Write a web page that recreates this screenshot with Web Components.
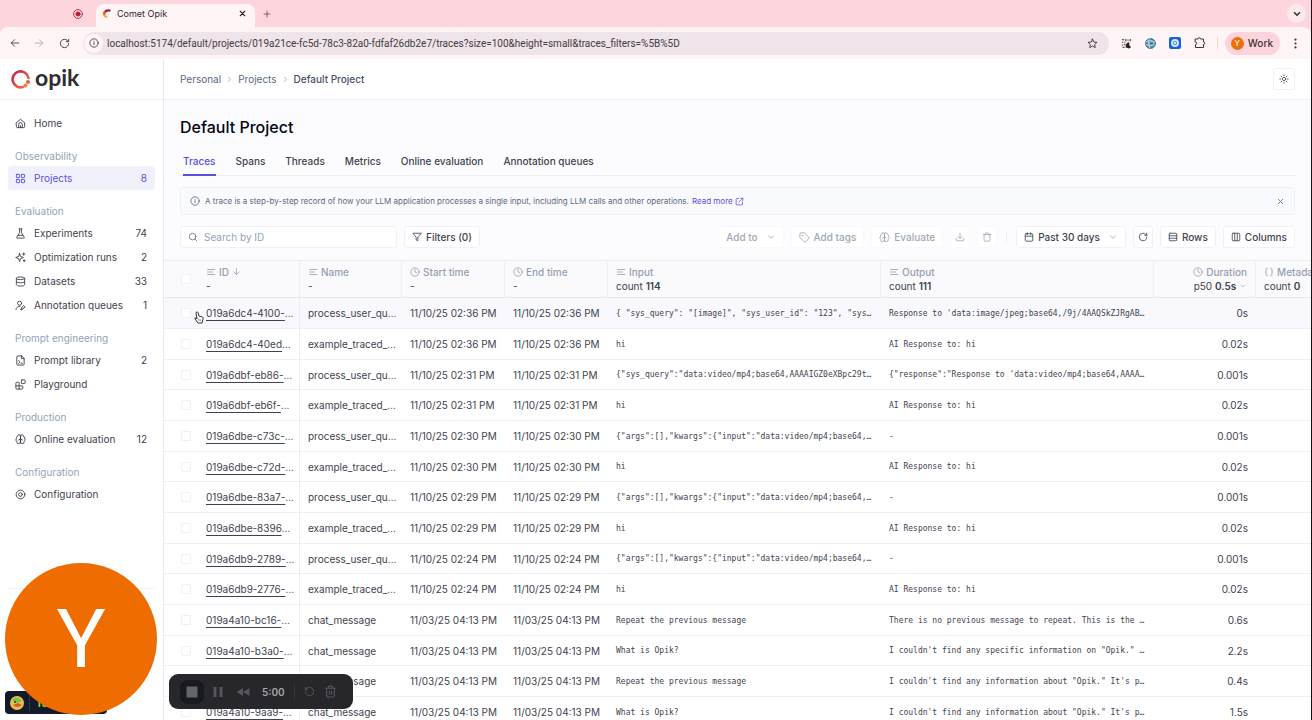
<!DOCTYPE html>
<html lang="en">
<head>
<meta charset="utf-8">
<title>Comet Opik</title>
<style>
html,body{margin:0;height:100%;overflow:hidden;background:#fdfcff;font-family:Inter,sans-serif}
</style>
</head>
<body>
<opik-app></opik-app>
<script>
const ICONS = {
  home:'<path d="M3 10l9-7 9 7v9a2 2 0 0 1-2 2H5a2 2 0 0 1-2-2z"/><path d="M8 21v-7a4 4 0 0 1 8 0v7M12 17v4"/>',
  grid:'<rect x="3" y="3" width="7" height="7" rx="1"/><rect x="14" y="3" width="7" height="7" rx="1"/><rect x="14" y="14" width="7" height="7" rx="1"/><rect x="3" y="14" width="7" height="7" rx="1"/>',
  flask:'<path d="M9 2h6M10 2v8L4 20a1 1 0 0 0 1 2h14a1 1 0 0 0 1-2L14 10V2M7 16h10"/>',
  sparkles:'<path d="M10 3l2 6.500 6.500 2.500-6.500 2.500-2 6.500-2-6.500L1.500 12 8 9.500zM19 2v5M16.500 4.500h5M20 17v4M18 19h4"/>',
  database:'<ellipse cx="12" cy="5" rx="9" ry="3"/><path d="M3 5v14a9 3 0 0 0 18 0V5M3 12a9 3 0 0 0 18 0"/>',
  userpen:'<circle cx="10" cy="7" r="4.500"/><path d="M2 21a8 8 0 0 1 9-7.500M13 21l1-4 5-5 3 3-5 5zM13 21l4-4"/>',
  filecode:'<path d="M14 2H6a2 2 0 0 0-2 2v16a2 2 0 0 0 2 2h12a2 2 0 0 0 2-2V8zM14 2v6h6M8 12l3 3-3 3M13 18h3"/>',
  blocks:'<path d="M9 22V8a1 1 0 0 0-1-1H4a2 2 0 0 0-2 2v11a2 2 0 0 0 2 2h11a2 2 0 0 0 2-2v-4a1 1 0 0 0-1-1H2"/><rect x="14" y="2" width="8" height="8" rx="1"/>',
  brain:'<path d="M12 4a3 3 0 0 0-6 1 4 4 0 0 0-3 5 4 4 0 0 0 1 6 4 4 0 0 0 8 2zM12 4a3 3 0 0 1 6 1 4 4 0 0 1 3 5 4 4 0 0 1-1 6 4 4 0 0 1-8 2zM12 4v16M8 13l4-2 4 2"/>',
  bolt:'<circle cx="12" cy="12" r="9.500"/><circle cx="12" cy="12" r="4"/>',
  info:'<circle cx="12" cy="12" r="10"/><path d="M12 16v-5M12 7.500v.500"/>',
  search:'<circle cx="11" cy="11" r="8"/><path d="M21 21l-4.300-4.300"/>',
  filter:'<path d="M22 3H2l8 9.500V19l4 2v-8.500z"/>',
  down:'<path d="M6 9l6 6 6-6"/>',
  right:'<path d="M9 18l6-6-6-6"/>',
  tag:'<path d="M12.600 2.600A2 2 0 0 0 11 2H4a2 2 0 0 0-2 2v7a2 2 0 0 0 .600 1.400l8.700 8.700a2.400 2.400 0 0 0 3.400 0l6.600-6.600a2.400 2.400 0 0 0 0-3.400z"/><circle cx="7.500" cy="7.500" r=".700"/>',
  download:'<path d="M3 15v4a2 2 0 0 0 2 2h14a2 2 0 0 0 2-2v-4M7 10l5 5 5-5M12 15V3"/>',
  trash:'<path d="M3 6h18M19 6v14a2 2 0 0 1-2 2H7a2 2 0 0 1-2-2V6M8 6V4a2 2 0 0 1 2-2h4a2 2 0 0 1 2 2v2"/>',
  trashlines:'<path d="M3 6h18M19 6v14a2 2 0 0 1-2 2H7a2 2 0 0 1-2-2V6M8 6V4a2 2 0 0 1 2-2h4a2 2 0 0 1 2 2v2M10 11v6M14 11v6"/>',
  calendar:'<rect x="3" y="4" width="18" height="18" rx="2"/><path d="M8 2v4M16 2v4M3 10h18"/>',
  refresh:'<path d="M21 12a9 9 0 1 1-9-9 9.800 9.800 0 0 1 6.700 2.700L21 8M21 3v5h-5"/>',
  undo:'<path d="M3 12a9 9 0 1 0 9-9 9.800 9.800 0 0 0-6.700 2.700L3 8M3 3v5h5"/>',
  rows:'<rect x="3" y="3" width="18" height="18" rx="2"/><path d="M3 9h18M3 15h18"/>',
  columns:'<rect x="3" y="3" width="18" height="18" rx="2"/><path d="M9 3v18M15 3v18"/>',
  x:'<path d="M18 6L6 18M6 6l12 12"/>',
  plus:'<path d="M12 3v18M3 12h18"/>',
  external:'<path d="M10 4H5a2 2 0 0 0-2 2v13a2 2 0 0 0 2 2h13a2 2 0 0 0 2-2v-6M15 3h6v6M10 14L21 3"/>',
  text:'<path d="M4 6h17M4 12h12M4 18h17"/>',
  clock:'<circle cx="12" cy="12" r="10"/><path d="M12 6v6l4 2"/>',
  braces:'<path d="M8 3H7a2 2 0 0 0-2 2v5a2 2 0 0 1-2 2 2 2 0 0 1 2 2v5c0 1 1 2 2 2h1M16 21h1a2 2 0 0 0 2-2v-5c0-1 1-2 2-2a2 2 0 0 1-2-2V5a2 2 0 0 0-2-2h-1"/>',
  arrowdown:'<path d="M12 4v16M5 13l7 7 7-7"/>',
  back:'<path d="M21 12H3M11 4l-8 8 8 8"/>',
  fwd:'<path d="M3 12h18M13 4l8 8-8 8"/>',
  star:'<path d="M12 2.500l2.900 6.200 6.800.800-5 4.700 1.300 6.700-6-3.300-6 3.300 1.300-6.700-5-4.700 6.800-.800z"/>',
  puzzle:'<path d="M3 4h5a2.500 2.500 0 0 1 5 0h6v6a2.500 2.500 0 0 1 0 5v6H3v-6a2.500 2.500 0 0 0 0-5z"/>',
  dots:'<g fill="currentColor" stroke="none"><circle cx="12" cy="3.500" r="2.400"/><circle cx="12" cy="12" r="2.400"/><circle cx="12" cy="20.500" r="2.400"/></g>',
  sun:'<circle cx="12" cy="12" r="4"/><path d="M12 2v2M12 20v2M5 5l1.400 1.400M17.600 17.600L19 19M2 12h2M20 12h2M5 19l1.400-1.400M17.600 6.400L19 5"/>',
  record:'<circle cx="12" cy="12" r="10.500"/><circle cx="12" cy="12" r="5" fill="currentColor"/>',
  stop:'<rect x="1" y="1" width="22" height="22" rx="1" fill="currentColor" stroke="none"/>',
  pause:'<path d="M3 2h6v20H3zM15 2h6v20h-6z" fill="currentColor" stroke="none"/>',
  rewind:'<path d="M12 5v14L1 12zM23 5v14l-11-7z" fill="currentColor" stroke="none"/>',
  comet:'<g fill="none" stroke-width="6"><path d="M11 21A9 9 0 0 1 7 7" stroke="#f9b233"/><path d="M6 13A9 9 0 0 1 12 5" stroke="#ee4b2b"/><path d="M11 5q5-2 9-1" stroke="#9c1c4c"/></g>',
  qr:'<g fill="#666" stroke="none"><path d="M2 2h5v3H2zM9 2h3v5H9zM14 3h3v3h-3zM19 2h3v5h-3zM2 8h3v3H2zM7 8h3v2H7zM14 8h4v2h-4zM2 14h3v3H2zM7 12h3v4H7zM3 19h5v3H3zM10 18h3v3h-3z"/><path d="M19 11a6 6 0 1 0 3 8 5 5 0 0 1-3-8z" fill="#222"/></g>',
  globe:'<circle cx="12" cy="12" r="11" fill="#5088ad" stroke="#49779b"/><path d="M3 8q9-6 18 1M3 15q8 5 17 0M9 2q-4 9 1 19" stroke="#c4dbe5" stroke-width="2"/><path d="M10 9h9v6h-9z" fill="#29587d" stroke="#b9d3df"/>',
  bluebox:'<rect width="24" height="24" rx="4" fill="#1463d8" stroke="none"/><circle cx="12" cy="12" r="6" fill="#3f83ea" stroke="#d4e5ff" stroke-width="4"/><circle cx="12" cy="12" r="2" fill="#fff" stroke="none"/>'
};
class OpikIcon extends HTMLElement{
  constructor(){super();this.attachShadow({mode:'open'});}
  connectedCallback(){
    const s=this.getAttribute('size')||12,w=this.getAttribute('weight')||2;
    this.shadowRoot.innerHTML=`<style>:host{display:inline-flex;flex:none}svg{display:block}</style><svg width="${s}" height="${s}" viewBox="0 0 24 24" fill="none" stroke="currentColor" stroke-width="${w}" stroke-linecap="round" stroke-linejoin="round" aria-hidden="true">${ICONS[this.getAttribute('name')]}</svg>`;
  }
}
customElements.define('opik-icon',OpikIcon);

function define(name,css,html,after){
  const t=document.createElement('template');
  t.innerHTML=`<style>*{box-sizing:border-box}button,input,a{font:inherit;color:inherit}button{border:0;background:none;padding:0;margin:0;display:inline-flex;align-items:center;justify-content:center}a{text-decoration:none}${css}</style>${html}`;
  customElements.define(name,class extends HTMLElement{
    constructor(){super();this.attachShadow({mode:'open'}).append(t.content.cloneNode(true));}
    connectedCallback(){if(after)after(this,this.shadowRoot);}
  });
}

define('browser-chrome',`
:host{display:block;flex:none;color:#40343a;background:#fdd5dd}
.tabs{height:27px;display:flex;align-items:flex-end;padding-right:5px}
.rec{margin:0 13px 8px 73px;color:#ba1830}
.tab{width:159px;height:23px;background:#fff4f6;border-radius:8px 8px 0 0;display:flex;align-items:center;padding:0 8px 4px 6px;font-size:9px;color:#33292d}
.tab span{flex:1;padding-left:6px}
.new{margin:0 0 9px 8px}
.menu{margin-left:auto;margin-bottom:4px;width:19px;height:19px;border-radius:50%;background:#feeaee}
.bar{height:32px;background:#fff4f6;display:flex;align-items:center;padding:0 10px;border-radius:8px 8px 0 0}
.bar button{color:#40343a}
.bar .f{margin:0 15px 0 14px;color:#b0a4a9}
.url{flex:1;height:23px;margin-left:13px;border-radius:12px;background:#eee4e9;display:flex;align-items:center;padding:0 11px 0 1px;gap:4px}
.url i{width:19px;height:19px;border-radius:50%;background:#fff4f6;display:flex;align-items:center;justify-content:center}
.url input{flex:1;min-width:0;border:0;background:none;padding:0;outline:0;font:10px Roboto,sans-serif;color:#443a42}
.ext{display:flex;gap:13px;align-items:center;padding:0 11px 0 12px}
.sep{width:1px;height:12px;background:#f5d3da;margin-right:7px}
.work{height:23px;border-radius:12px;background:#fdd3dc;padding:0 7px 0 6px;gap:4px;font-size:10px;font-weight:500;margin-right:10px}
.work b{width:13px;height:13px;border-radius:50%;background:#e8710a;color:#fff;font-size:8px;font-weight:400;display:flex;align-items:center;justify-content:center}
`,`
<div class="tabs"><opik-icon class="rec" name="record" size="10"></opik-icon>
<div class="tab"><opik-icon name="comet" size="9"></opik-icon><span>Comet Opik</span><button aria-label="Close tab"><opik-icon name="x" size="9" weight="3"></opik-icon></button></div>
<button class="new" aria-label="New tab"><opik-icon name="plus" size="8"></opik-icon></button>
<button class="menu" aria-label="Tab search"><opik-icon name="down" size="10" weight="4"></opik-icon></button></div>
<div class="bar"><button aria-label="Back"><opik-icon name="back" size="10"></opik-icon></button><button class="f" aria-label="Forward"><opik-icon name="fwd" size="10"></opik-icon></button><button aria-label="Reload"><opik-icon name="refresh" size="11"></opik-icon></button>
<div class="url"><i><opik-icon name="info" size="10"></opik-icon></i><input aria-label="Address" value="localhost:5174/default/projects/019a21ce-fc5d-78c3-82a0-fdfaf26db2e7/traces?size=100&amp;height=small&amp;traces_filters=%5B%5D"><opik-icon name="star" size="11"></opik-icon></div>
<div class="ext"><opik-icon name="qr" size="11"></opik-icon><opik-icon name="globe" size="11"></opik-icon><opik-icon name="bluebox" size="12"></opik-icon><opik-icon name="puzzle" size="12"></opik-icon></div>
<span class="sep"></span><button class="work"><b>Y</b>Work</button><button aria-label="Menu"><opik-icon name="dots" size="11"></opik-icon></button></div>`);

define('nav-item',`
:host{display:block}
a{display:flex;align-items:center;gap:8px;height:24px;padding:0 8px 0 7px;border-radius:3px;font-size:10px;color:#3f434f}
span{flex:1;white-space:nowrap}
b{font-weight:400}
:host([active]) a{background:#f1f1fb;color:#5a51dc}
`,`<a href="#"><opik-icon size="11"></opik-icon><span><slot></slot></span><b></b></a>`,
(h,r)=>{r.querySelector('opik-icon').setAttribute('name',h.getAttribute('icon'));r.querySelector('opik-icon').connectedCallback();r.querySelector('b').textContent=h.getAttribute('count')||'';});

define('nav-group',`
:host{display:block;padding-top:11px}
h2{margin:0;height:20px;line-height:20px;padding-left:7px;font-size:10px;font-weight:400;color:#94a3b8}
`,`<h2></h2><slot></slot>`,(h,r)=>{r.querySelector('h2').textContent=h.getAttribute('label');});

define('side-bar',`
:host{display:flex;flex-direction:column;width:164px;flex:none;box-sizing:border-box;background:#fff;border-right:1px solid #e8eaf2}
.logo{height:41px;flex:none;border-bottom:1px solid #eceef4;display:flex;align-items:center;padding-left:11px;gap:4px;color:#2f2d32;font:700 23px/28px Lato,sans-serif}
.logo span{padding-bottom:4px}
nav{flex:1;padding:11px 8px 0}
footer{height:132px;flex:none;margin:0 8px;border-top:1px solid #f0f1f6}
`,`<div class="logo"><svg width="20" height="21" viewBox="0 0 20 21" fill="none"><defs><linearGradient id="g" x1="0" y1="0" x2="1" y2="1"><stop stop-color="#c21d4c"/><stop offset="1" stop-color="#fb7648"/></linearGradient></defs><path d="M17.500 9A8 8 0 1 0 12 18" stroke="url(#g)" stroke-width="2.600" stroke-linecap="round"/><circle cx="17" cy="13" r="2" fill="#ef5a45"/><circle cx="14.500" cy="16.500" r="2" fill="#f97a4e"/></svg><span>opik</span></div>
<nav><nav-item icon="home">Home</nav-item>
<nav-group label="Observability"><nav-item icon="grid" count="8" active>Projects</nav-item></nav-group>
<nav-group label="Evaluation"><nav-item icon="flask" count="74">Experiments</nav-item><nav-item icon="sparkles" count="2">Optimization runs</nav-item><nav-item icon="database" count="33">Datasets</nav-item><nav-item icon="userpen" count="1">Annotation queues</nav-item></nav-group>
<nav-group label="Prompt engineering"><nav-item icon="filecode" count="2">Prompt library</nav-item><nav-item icon="blocks">Playground</nav-item></nav-group>
<nav-group label="Production"><nav-item icon="brain" count="12">Online evaluation</nav-item></nav-group>
<nav-group label="Configuration"><nav-item icon="bolt">Configuration</nav-item></nav-group></nav><footer></footer>`);

define('page-header',`
:host{display:flex;align-items:center;height:41px;flex:none;box-sizing:border-box;background:#fff;border-bottom:1px solid #eceef4;padding:0 16px;font-size:10px;color:#5c6a80}
nav{display:flex;align-items:center;gap:4px;flex:1}
nav opik-icon{color:#94a3b8}
b{font-weight:500;color:#45506a}
button{width:22px;height:22px;border:1px solid #f0f1f6;border-radius:3px;color:#45454b}
`,`<nav aria-label="Breadcrumb"><a href="#">Personal</a><opik-icon name="right" size="9"></opik-icon><a href="#">Projects</a><opik-icon name="right" size="9"></opik-icon><b>Default Project</b></nav><button aria-label="Theme"><opik-icon name="sun" size="10"></opik-icon></button>`);

define('project-head',`
:host{display:block;padding:16px 16px 0}
h1{margin:0;font-size:16px;line-height:22px;font-weight:500;color:#020617}
.tabs{display:flex;gap:20px;height:27px;margin-top:11px;padding-left:3px;border-bottom:1px solid #eceef4;font-size:10px;font-weight:500;color:#3f434f}
.tabs button{align-items:flex-start;padding-top:6px;height:27px}
.tabs .on{color:#5a51dc;border-bottom:2px solid #5a51dc}
.note{margin-top:11px;height:28px;border:1px solid #f0f1f7;border-radius:3px;background:#f9fafd;display:flex;align-items:center;padding:0 9px;font-size:8px;color:#5c6a80}
.note a{color:#5a51dc;display:inline-flex;align-items:center;gap:2px;margin-left:3px}
.note span{flex:1;padding-left:5px;white-space:nowrap}
`,`<h1>Default Project</h1>
<div class="tabs" role="tablist"><button class="on" role="tab">Traces</button><button role="tab">Spans</button><button role="tab">Threads</button><button role="tab">Metrics</button><button role="tab">Online evaluation</button><button role="tab">Annotation queues</button></div>
<div class="note"><opik-icon name="info" size="10"></opik-icon><span>A trace is a step-by-step record of how your LLM application processes a single input, including LLM calls and other operations.<a href="#">Read more<opik-icon name="external" size="9"></opik-icon></a></span><button aria-label="Dismiss"><opik-icon name="x" size="9"></opik-icon></button></div>`);

define('trace-toolbar',`
:host{display:flex;align-items:center;padding:11px 16px 12px;gap:7px;font-size:10px;font-weight:500;color:#3f434f}
button,label{height:22px;border:1px solid #f0f1f6;border-radius:3px;background:#fff;gap:4px;padding:0 7px;white-space:nowrap}
label{display:flex;align-items:center;gap:6px;width:217px;color:#64748b}
input{border:0;padding:0;outline:0;background:none;min-width:0;flex:1;font-weight:400}
input::placeholder{color:#94a3b8;opacity:1}
.push{margin-left:auto}
.off{color:#a2a9b5;border-color:#f9f9fc}
.sq{width:20px;padding:0}
.sep{width:1px;height:12px;background:#eceef4;margin:0 2px}
.soft{color:#a2a9b5;margin-left:4px}
`,`<label><opik-icon name="search" size="10"></opik-icon><input placeholder="Search by ID" aria-label="Search by ID"></label>
<button><opik-icon name="filter" size="10"></opik-icon>Filters (0)</button>
<button class="off push" disabled>Add to<opik-icon class="soft" name="down" size="10"></opik-icon></button>
<button class="off" disabled><opik-icon name="tag" size="11"></opik-icon>Add tags</button>
<button class="off" disabled><opik-icon name="brain" size="11"></opik-icon>Evaluate</button>
<button class="off sq" disabled aria-label="Download"><opik-icon name="download" size="10"></opik-icon></button>
<button class="off sq" disabled aria-label="Delete"><opik-icon name="trash" size="10"></opik-icon></button>
<span class="sep"></span>
<button><opik-icon name="calendar" size="10"></opik-icon>Past 30 days<opik-icon class="soft" name="down" size="10"></opik-icon></button>
<button class="sq" aria-label="Refresh"><opik-icon name="refresh" size="10"></opik-icon></button>
<button><opik-icon name="rows" size="10"></opik-icon>Rows</button>
<button><opik-icon name="columns" size="10"></opik-icon>Columns</button>`);

const P='process_user_qu…',E='example_traced_…',C='chat_message',ARGS='{"args":[],"kwargs":{"input":"data:video/mp4;base64,…';
const ROWS=[
['019a6dc4-4100-',P,'11/10/25 02:36 PM','{ "sys_query": "[image]", "sys_user_id": "123", "sys…','Response to \'data:image/jpeg;base64,/9j/4AAQSkZJRgAB…','0s'],
['019a6dc4-40ed',E,'11/10/25 02:36 PM','hi','AI Response to: hi','0.02s'],
['019a6dbf-eb86-',P,'11/10/25 02:31 PM','{"sys_query":"data:video/mp4;base64,AAAAIGZ0eXBpc29t…','{"response":"Response to \'data:video/mp4;base64,AAAA…','0.001s'],
['019a6dbf-eb6f-',E,'11/10/25 02:31 PM','hi','AI Response to: hi','0.02s'],
['019a6dbe-c73c-',P,'11/10/25 02:30 PM',ARGS,'-','0.001s'],
['019a6dbe-c72d-',E,'11/10/25 02:30 PM','hi','AI Response to: hi','0.02s'],
['019a6dbe-83a7-',P,'11/10/25 02:29 PM',ARGS,'-','0.001s'],
['019a6dbe-8396',E,'11/10/25 02:29 PM','hi','AI Response to: hi','0.02s'],
['019a6db9-2789-',P,'11/10/25 02:24 PM',ARGS,'-','0.001s'],
['019a6db9-2776-',E,'11/10/25 02:24 PM','hi','AI Response to: hi','0.02s'],
['019a4a10-bc16-',C,'11/03/25 04:13 PM','Repeat the previous message','There is no previous message to repeat. This is the …','0.6s'],
['019a4a10-b3a0-',C,'11/03/25 04:13 PM','What is Opik?','I couldn\'t find any specific information on "Opik." …','2.2s'],
['019a4a10-a6f2-',C,'11/03/25 04:13 PM','Repeat the previous message','I couldn\'t find any information about "Opik." It\'s p…','0.4s'],
['019a4a10-9aa9-',C,'11/03/25 04:13 PM','What is Opik?','I couldn\'t find any information about "Opik." It\'s p…','1.5s']];

define('trace-table',`
:host{display:block;flex:1;min-height:0;overflow:hidden}
table{width:1192px;table-layout:fixed;border-collapse:separate;border-spacing:0;font-size:10px;color:#3f434f}
.c0{width:34px}.c1,.c2,.c7{width:102px}.c3,.c4{width:103px}.c5,.c6{width:273px}
th{height:38px;text-align:left;font-weight:400;padding:0 8px;border-top:1px solid #eceef4;border-bottom:1px solid #e6e8f0;background:#fafafc;vertical-align:middle;border-right:1px solid #f0f1f6}
th:first-child{border-right:0}
th div{display:flex;align-items:center;gap:3px;height:14px;line-height:14px;white-space:nowrap;font-weight:500;color:#94a0b3}
th p{margin:0;height:14px;line-height:14px;white-space:nowrap}
th b{font-weight:600}
p opik-icon{color:#a2a9b5}
td{height:31px;padding:0 2px 0 8px;border-bottom:1px solid #eff0f6;background:#fff;white-space:nowrap}
tr:nth-child(3n) td{height:30px}
tr:first-child td{background:#f9f9fd}
td:nth-child(2){border-right:1px solid #eceef5}
td:nth-child(6),td:nth-child(7){font:8px "DejaVu Sans Mono",monospace}
td a{text-decoration:underline;text-underline-offset:3px}
.r div{justify-content:flex-end}
.r{text-align:right}
td.r{padding-right:8px}
input{appearance:none;display:block;width:10px;height:10px;margin:0 0 0 9px;border:1px solid #f0f0f5;border-radius:2px;background:#fff}
`,`<table><colgroup><col class="c0"><col class="c1"><col class="c2"><col class="c3"><col class="c4"><col class="c5"><col class="c6"><col class="c7"><col></colgroup><thead><tr></tr></thead><tbody></tbody></table>`,
(h,r)=>{
  const ic=(n,s=10)=>`<opik-icon name="${n}" size="${s}"></opik-icon>`;
  const box=l=>`<input type="checkbox" aria-label="${l}">`;
  const H=[['text','ID '+ic('arrowdown',9),'-'],['text','Name','-'],['clock','Start time','-'],['clock','End time','-'],['text','Input','count <b>114</b>'],['text','Output','count <b>111</b>'],['clock','Duration','p50 <b>0.5s</b> '+ic('down',8)],['braces','Metadata','count <b>0</b>']];
  r.querySelector('thead tr').innerHTML=`<th>${box('Select all')}</th>`+H.map((x,i)=>`<th class="${i==6?'r':''}"><div>${ic(x[0])}<span>${x[1]}</span></div><p>${x[2]}</p></th>`).join('');
  r.querySelector('tbody').innerHTML=ROWS.map(x=>`<tr><td>${box('Select '+x[0])}</td><td><a href="#">${x[0]}</a>…</td><td>${x[1]}</td><td>${x[2]}</td><td>${x[2]}</td><td>${x[3]}</td><td>${x[4]}</td><td class="r">${x[5]}</td><td></td></tr>`).join('');
});

define('recorder-bar',`
:host{display:flex;align-items:center;height:35px;width:184px;box-sizing:border-box;border-radius:9px;background:#27262b;font-size:10px;font-weight:600;padding:0 11px}
.s{width:24px;height:24px;border-radius:8px;background:#171a1e;color:#63656a;margin-right:8px}
button{color:#55555b}time{color:#a5a5aa;margin:0 9px 0 12px}.g{margin-left:12px}i{width:1px;height:16px;background:#38373c;margin-right:9px}.t{margin-left:9px}
`,`<button class="s" aria-label="Stop"><opik-icon name="stop" size="12"></opik-icon></button><button aria-label="Pause"><opik-icon name="pause" size="12"></opik-icon></button><button class="g" aria-label="Rewind"><opik-icon name="rewind" size="14"></opik-icon></button><time>5:00</time><i></i><button aria-label="Restart"><opik-icon name="undo" size="11"></opik-icon></button><button class="t" aria-label="Delete"><opik-icon name="trashlines" size="13"></opik-icon></button>`);

define('camera-bubble',`
:host{display:flex;align-items:center;justify-content:center;width:152px;height:152px;border-radius:50%;background:#ef6c00;color:#fff;font:400 82px/152px Roboto,sans-serif}
`,`<slot></slot>`);

define('debug-badge',`
:host{display:flex;align-items:center;gap:5px;width:102px;height:23px;box-sizing:border-box;padding-left:5px;border-radius:4px;background:#151a2a;color:#8ce020;font:700 10px Inter,sans-serif}
i{width:1px;height:16px;background:#30364a}span{margin-left:1px}
`,`<svg width="14" height="14" viewBox="0 0 14 14"><circle cx="7" cy="7" r="7" fill="#e9c14a"/><path d="M2 4q5-5 10 1l-5 2z" fill="#79bf51"/><path d="M3 9q4 4 9 0l-4-2z" fill="#d5583b"/><circle cx="5" cy="6" r="1" fill="#333"/></svg><i></i><span>Ta</span>`);

define('opik-app',`
:host{display:flex;flex-direction:column;height:100vh;border-right:1px solid #171318;position:relative;overflow:hidden;box-sizing:border-box}
.body{flex:1;display:flex;min-height:0}
main{flex:1;min-width:0;display:flex;flex-direction:column;overflow:hidden;background:#fcfcfe}
debug-badge{position:absolute;left:5px;bottom:6px}
camera-bubble{position:absolute;left:5px;bottom:5px}
recorder-bar{position:absolute;left:169px;bottom:11px}
.cur{position:absolute;left:194px;top:311px}
`,`<browser-chrome></browser-chrome><div class="body"><side-bar></side-bar><main><page-header></page-header><project-head></project-head><trace-toolbar></trace-toolbar><trace-table></trace-table></main></div>
<debug-badge></debug-badge><camera-bubble>Y</camera-bubble><recorder-bar></recorder-bar>
<svg class="cur" width="10" height="13" viewBox="0 0 20 26"><path d="M5 2q2-1 3 1l2 7 7 2q2 1 1 4l-2 8H8l-6-8q-1-3 2-2l2 2L4 4z" fill="#fff" stroke="#333" stroke-width="2"/><path d="M9 16l1 4M12 16l1 4" stroke="#333"/></svg>`);
</script>
</body>
</html>
